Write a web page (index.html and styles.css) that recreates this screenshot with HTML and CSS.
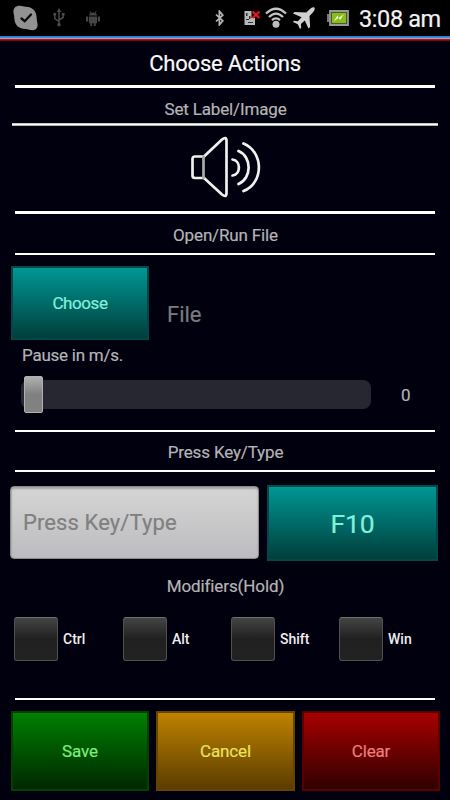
FILE: index.html
```html
<!DOCTYPE html>
<html lang="en">
<head>
  <meta charset="UTF-8" />
  <meta name="viewport" content="width=device-width, initial-scale=1.0" />
  <title>Choose Actions</title>
  <link rel="stylesheet" href="styles.css">
</head>
<body>
  <header class="statusbar">
    <svg class="ic-skype" width="26" height="26" viewBox="0 0 26 26">
      <path d="M6.500.8C3 .8.300 3 .400 7c.1 2 .9 3 .9 6C1.500 20 6 24 12.500 24c3 0 4 1.300 7 1.300 4 0 5.500-3 5-6.500-.2-2-.8-3-.8-5.800C23.700 6 19 1.800 13 1.800 10.500 1.800 9.500.8 6.500.8z" fill="#929292"/>
      <path d="M8.500 13.500l3.200 2.700 6.300-6.700" fill="none" stroke="#0a0a0a" stroke-width="2.300" stroke-linecap="round"/>
    </svg>
    <svg class="ic-usb" width="12" height="19" viewBox="0 0 12 19">
      <path d="M6 2v15M1.800 7v3.500L6 13.500M10.200 7v2.500L6 12" fill="none" stroke="#4b4b4b" stroke-width="1.500"/>
      <path d="M6 0l2.300 4H3.700zM.4 5h2.800v2.600H.4zM8.800 5h2.800v2.600H8.800z" fill="#4b4b4b"/>
      <circle cx="6" cy="16.700" r="1.800" fill="#4b4b4b"/>
    </svg>
    <svg class="ic-android" width="14" height="15" viewBox="0 0 14 15">
      <path d="M3 4.600C3 .6 11 .6 11 4.600zM3 5.400h8v6.800H3zM0 5.600h2.200v5H0zM11.800 5.600H14v5h-2.200zM4.300 12h1.800v3H4.300zM7.900 12h1.800v3H7.900z" fill="#454745"/>
      <path d="M3.800.2l1.200 2M10.200.2L9 2.200" stroke="#454745"/>
    </svg>
    <svg class="ic-bt" width="9" height="16" viewBox="0 0 9 16">
      <path d="M1 4.500l6.800 6.300-3.400 4V1.200l3.400 4L1 11.500" fill="none" stroke="#b5b5b5" stroke-width="1.700"/>
    </svg>
    <svg class="ic-sim" width="17" height="16" viewBox="0 0 17 16">
      <path d="M.5 1h7v7h3.500v7H.5z" fill="#b9b9b9"/>
      <path d="M2 3h1.500v3H2zM5 6h1.500v3H5zM2 9h3v1H2zM4 12h5v1H4z" fill="#333"/>
      <path d="M8.500 1.500l7 6.500M15.500 1.500l-7 6.500" stroke="#f01418" stroke-width="2.200"/>
    </svg>
    <svg class="ic-wifi" width="22" height="21" viewBox="0 0 22 21">
      <path d="M1 6.500Q11-3 21 6.500M4 10Q11 3.200 18 10M7 13.200Q11 9.500 15 13.200" fill="none" stroke="#c6c6c6" stroke-width="2.300"/>
      <circle cx="11" cy="17.200" r="3.500" fill="#bdbdbd"/>
    </svg>
    <svg class="ic-plane" width="22" height="22" viewBox="0 0 22 22">
      <path d="M21.300.6c-1-1-3 0-4.600 1.600l-3.500 3.400L1.500 5 0 6.600l8.600 3.600-3.700 4-4-.4L0 14.900l4.800 2.300L7 22l1.200-1-.3-4 3.900-3.600L15.500 21.500l1.600-1.500-.6-11 3.300-3.500C21.500 3.800 22.300 1.700 21.300.6z" fill="#d0d0d0"/>
    </svg>
    <svg class="ic-batt" width="22" height="16" viewBox="0 0 22 16">
      <path d="M0 4h3v8H0z" fill="#777"/>
      <path d="M3 1h18v14H3z" fill="#4c5a25" stroke="#99969d" stroke-width="1.800"/>
      <path d="M5 3h14v10H5z" fill="#86bd16"/>
      <path d="M6.500 11.500l4-6 1 2.500 5.500-4-4 6-1.300-2.300z" fill="#eef7dc"/>
    </svg>
    <span class="clock">3:08 am</span>
  </header>
  <div class="stripe"></div>

  <main class="screen">
    <h1 class="title">Choose Actions</h1>
    <hr class="rule thick">
    <h2 class="label label-image">Set Label/Image</h2>
    <hr class="rule wide">
    <div class="image-box">
      <svg width="72" height="64" viewBox="0 0 72 64">
        <g fill="none" stroke="#f0f0f0" stroke-width="2.700" stroke-linejoin="round" stroke-linecap="round">
          <path d="M14 20.500L32 3.500Q36.500 0 36.500 5V57Q36.500 62 32 58.500L14 42"/>
          <path d="M14 20.500H5Q2.500 20.500 2.500 23V39.500Q2.500 42 5 42H14"/>
          <path d="M13.500 20.500v21.500" stroke="#aaa"/>
          <path d="M42.500 23.500C51 24.500 51 38.500 42.500 39.500M48.500 15C62 20.500 62 42.500 48.500 48M53.500 7.500C74 16 74 47 53.500 55"/>
        </g>
      </svg>
    </div>
    <hr class="rule thick">
    <h2 class="label label-file">Open/Run File</h2>
    <hr class="rule">

    <div class="file-row">
      <button class="btn teal choose">Choose</button>
      <span class="file-name">File</span>
    </div>
    <p class="pause">Pause in m/s.</p>
    <div class="slider-row">
      <div class="track"><div class="thumb"></div></div>
      <span class="value">0</span>
    </div>

    <hr class="rule">
    <h2 class="label label-key">Press Key/Type</h2>
    <hr class="rule">
    <div class="key-row">
      <input class="key-input" type="text" placeholder="Press Key/Type">
      <button class="btn teal key">F10</button>
    </div>

    <h2 class="label label-mod">Modifiers(Hold)</h2>
    <div class="modifiers">
      <label class="mod"><span class="box"></span>Ctrl</label>
      <label class="mod"><span class="box"></span>Alt</label>
      <label class="mod"><span class="box"></span>Shift</label>
      <label class="mod"><span class="box"></span>Win</label>
    </div>

    <hr class="rule">
    <div class="actions">
      <button class="btn green">Save</button>
      <button class="btn orange">Cancel</button>
      <button class="btn red">Clear</button>
    </div>
  </main>
</body>
</html>
```

FILE: styles.css
```css
* { box-sizing: border-box; }
body {
  margin: 0;
  width: 450px;
  height: 800px;
  overflow: hidden;
  background: #00000f;
  color: #b4b4b4;
  font-family: Roboto, sans-serif;
  -webkit-text-stroke: 0.2px;
}
.statusbar {
  display: flex;
  align-items: center;
  height: 36px;
  padding-left: 13px;
  background: #000;
}
.statusbar svg { flex: none; }
.ic-skype { margin-top: -1px; }
.ic-usb { margin-left: 14px; margin-top: -1px; }
.ic-android { margin-left: 21px; }
.ic-bt { margin-left: 115px; }
.ic-sim { margin-left: 20px; margin-top: -1px; }
.ic-wifi { margin-left: 4px; margin-top: -2px; }
.ic-plane { margin-left: 6px; margin-top: -1px; }
.ic-batt { margin-left: 12px; }
.clock {
  margin-left: 10px;
  padding-top: 1px;
  color: #f2f2f2;
  font-size: 23.5px;
  letter-spacing: -0.4px;
  white-space: nowrap;
}
.stripe {
  height: 5px;
  background: linear-gradient(#2080c4 0 1px, #279de4 1px 2px, #9ba0cc 2px 3px, #d90012 3px 4px, #850008 4px);
}
.screen { height: 759px; }
h1, h2, p { margin: 0; }
.title {
  height: 44px;
  line-height: 45px;
  text-align: center;
  color: #f8f8f8;
  font-size: 22px;
  font-weight: 400;
  letter-spacing: -0.2px;
}
.rule {
  height: 2px;
  margin: 0 15px;
  border: 0;
  background: #fff;
}
.rule.thick { height: 3px; }
.rule.wide { margin: 0 12px; height: 3px; background: linear-gradient(#c4cbc4 0 1px, #fff 1px 2px, #b0b6b0 2px); }
.label {
  padding-left: 1px;
  text-align: center;
  font-size: 17px;
  font-weight: 400;
  letter-spacing: -0.15px;
}
.label-image { height: 35px; line-height: 42px; }
.image-box {
  display: flex;
  height: 85px;
  padding: 10px 0 0 190px;
}
.label-file { height: 39px; line-height: 42px; }
.label-key { height: 38px; line-height: 41px; }
.label-mod { height: 57px; line-height: 53px; letter-spacing: -0.1px; }

.btn {
  padding: 0;
  border: 2px solid;
  font-family: inherit;
  font-size: 17px;
  letter-spacing: -0.15px;
}
.teal { color: #83f0da; background: linear-gradient(#009997, #003c38) border-box; border-color: #00484a; }
.green { color: #7cec7c; background: linear-gradient(#008200, #002400) border-box; border-color: #004300; }
.orange { color: #e9e35d; background: linear-gradient(#c28400, #583b00) border-box; border-color: #634500; }
.red { color: #eb7d7d; background: linear-gradient(#aa0000, #2d0000) border-box; border-color: #590000; }

.file-row {
  display: flex;
  height: 85px;
  padding: 11px 0 0 11px;
}
.choose {
  width: 138px;
  height: 74px;
  letter-spacing: -0.4px;
}
.file-name {
  margin-left: 18px;
  color: #7b7b7b;
  font-size: 22px;
  line-height: 98px;
}
.pause {
  height: 36px;
  padding-left: 22px;
  font-size: 17px;
  line-height: 31px;
  letter-spacing: -0.25px;
}
.slider-row {
  display: flex;
  align-items: center;
  height: 54px;
  padding: 0 0 18px 21px;
}
.track {
  display: flex;
  align-items: center;
  width: 350px;
  height: 29px;
  padding-left: 3px;
  border-radius: 8px;
  background: #272731;
}
.thumb {
  width: 19px;
  height: 37px;
  flex: none;
  border: 1px solid #b0b0b0;
  border-radius: 2px;
  background: linear-gradient(#b0b0b0, #808080 50%, #828282);
}
.value { margin-left: 30px; padding-top: 1px; font-size: 17px; }

.key-row {
  display: flex;
  height: 88px;
  padding: 13px 12px 0 10px;
}
.key-input {
  width: 249px;
  height: 73px;
  margin-top: 1px;
  padding: 0 12px;
  border: 1px solid #8b8b8b;
  border-radius: 4px;
  background: linear-gradient(#d5d5d6, #bcbcbe);
  box-shadow: inset 0 2px 2px #a3a3a3, inset 1px 0 1px #b0b0b0;
  font-family: inherit;
  font-size: 22px;
  letter-spacing: 0.1px;
}
.key-input::placeholder { color: #808080; }
.key {
  width: 171px;
  height: 76px;
  margin-left: 8px;
  font-size: 26.5px;
}
.modifiers {
  display: grid;
  grid-template-columns: 109px 108px 108px 108px;
  height: 81px;
  padding-left: 14px;
}
.mod {
  display: flex;
  align-items: center;
  height: 44px;
  gap: 5px;
  padding-bottom: 1px;
  color: #eee;
  font-size: 14px;
  font-weight: 500;
  -webkit-text-stroke: 0;
}
.box {
  width: 44px;
  height: 44px;
  border: 1px solid #50504e;
  border-top-color: #70706e;
  border-radius: 3px;
  background: linear-gradient(#444, #202020 50%, #222);
}
.actions {
  display: grid;
  grid-template-columns: 138px 139px 138px;
  gap: 7px;
  padding: 11px 11px 0;
}
.actions .btn { height: 80px; }
```
